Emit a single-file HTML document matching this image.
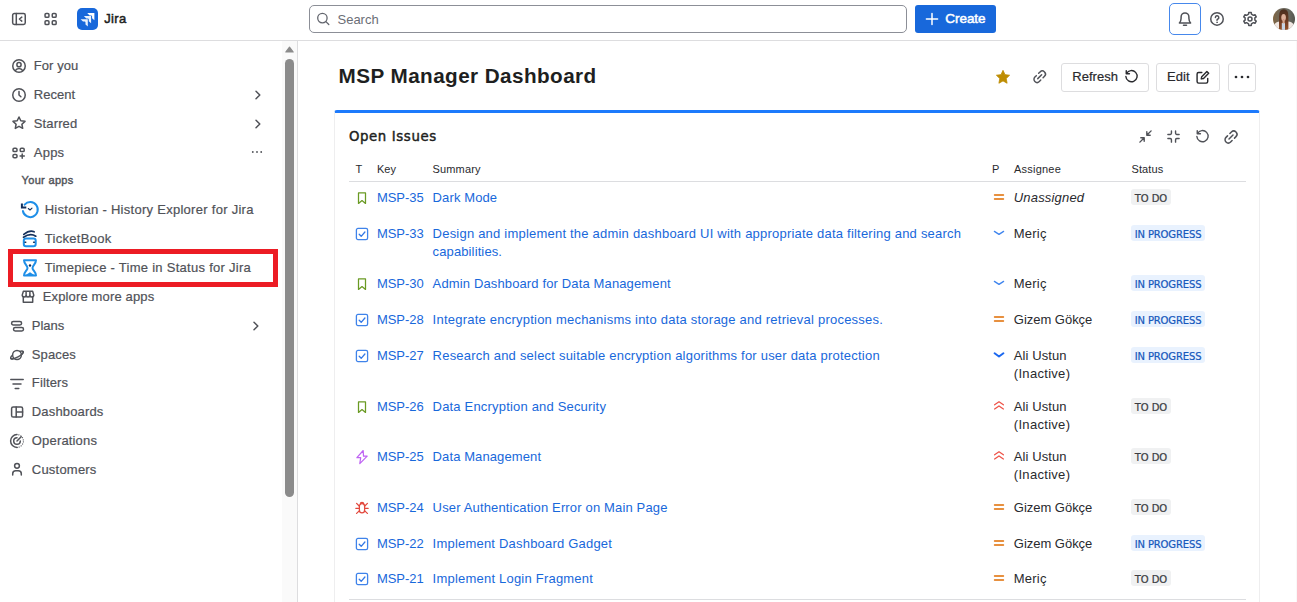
<!DOCTYPE html>
<html lang="en">
<head>
<meta charset="utf-8">
<title>MSP Manager Dashboard - Jira</title>
<style>
*{box-sizing:border-box;margin:0;padding:0}
html,body{width:1297px;height:602px;overflow:hidden;background:#fff}
body{position:relative;font-family:"Liberation Sans",Arial,sans-serif;color:#292a2e;font-size:13px}
.abs{position:absolute}
svg{position:absolute;overflow:visible}
.tx{position:absolute;white-space:nowrap}
.semi{-webkit-text-stroke:.45px currentColor}
.semi2{-webkit-text-stroke:.5px currentColor}
.med{-webkit-text-stroke:.2px currentColor}
.semi3{-webkit-text-stroke:.4px currentColor}
.ic{fill:none;stroke:#505258;stroke-width:1.5;stroke-linecap:round;stroke-linejoin:round}
#topline{left:0;top:40px;width:1297px;height:1px;background:#dddddf}
#jira-logo{left:77px;top:7.8px;width:21.2px;height:21.8px;border-radius:5px;background:#1868db}
#search{left:309px;top:5px;width:598px;height:28px;border:1px solid #8c8f97;border-radius:5px;background:#fff}
#create{left:915px;top:5px;width:81px;height:28px;border-radius:3px;background:#1868db}
#bell{left:1169px;top:3px;width:32px;height:32px;border:1.5px solid #4688ec;border-radius:5px}
#side-border{left:297px;top:41px;width:1px;height:561px;background:#dddddf}
#sb-track{left:282px;top:41px;width:15px;height:561px;background:#fafafa}
#sb-thumb{left:285px;top:59px;width:9px;height:438px;border-radius:5px;background:#8b8b8b}
#redbox{left:8px;top:249px;width:270px;height:38px;border:5px solid #ec1c24}
.btn{position:absolute;top:63px;height:29px;border:1px solid #dddddf;border-radius:3px;background:#fff}
#gadget{left:333.5px;top:110px;width:926.5px;height:500px;border:1px solid #eeeeef;border-top:3px solid #1d7afc;border-radius:3px 3px 0 0;background:#fff}
#hline{left:349px;top:181px;width:897px;height:1px;background:#dcdde0}
#bline{left:349px;top:598.5px;width:897px;height:1px;background:#dcdde0}
#rline{left:1296px;top:41px;width:1px;height:561px;background:#f8f8f8}
.loz{position:absolute;left:1131.2px;height:16px;border-radius:3px;white-space:nowrap;overflow:hidden}
.loz span{position:absolute;left:3.5px;top:2px;font-family:"DejaVu Sans","Liberation Sans",sans-serif;font-size:10px;line-height:16px;-webkit-text-stroke:.22px currentColor}
.todo{background:#f0f1f2;color:#3b3d42}
.prog{background:#e9f2fe;color:#1558bc}
</style>
</head>
<body>

<header>
<!-- TOP BAR -->
<div class="abs" id="topline"></div>
<svg style="left:11px;top:11.450px" width="16" height="16" viewBox="0 0 16 16" class="ic" stroke-width="1.350"><rect x="1.650" y="2.450" width="12.600" height="11.100" rx="1.700"/><path d="M5.300 2.450v11.100M10.800 6.100L8.400 8l2.400 2.100"/></svg>
<svg style="left:43.400px;top:11.450px" width="16" height="16" viewBox="0 0 16 16" class="ic" stroke-width="1.400"><rect x="2.050" y="2.450" width="3.900" height="3.900" rx="1.100"/><rect x="9.250" y="2.450" width="3.900" height="3.900" rx="1.100"/><rect x="2.050" y="9.650" width="3.900" height="3.900" rx="1.100"/><rect x="9.250" y="9.650" width="3.900" height="3.900" rx="1.100"/></svg>
<div class="abs" id="jira-logo"></div>
<svg style="left:77px;top:7.8px" width="21.2" height="21.8" viewBox="77 7.8 21.2 21.8"><g fill="#fff"><path d="M87.2 12.8H94.4V20L92.100 18V16.100Q92.100 15.200 91.200 15.200H89.600z"/><path d="M83.900 15.900H91.100V23.100L88.800 21.100V19.200Q88.800 18.300 87.900 18.300H86.300z" opacity=".92"/><path d="M80.600 19H87.800V26.200L85.500 24.200V22.300Q85.500 21.400 84.600 21.400H83z" opacity=".92"/></g></svg>
<div class="abs" id="search"></div>
<svg style="left:316px;top:12px" width="16" height="16" viewBox="0 0 16 16" class="ic"><circle cx="6.400" cy="6.100" r="4.700" style="stroke:#63666e;stroke-width:1.300"/><path d="M9.900 9.600l2.900 2.900" style="stroke:#63666e;stroke-width:1.300"/></svg>
<div class="abs" id="create"></div>
<svg style="left:924.400px;top:11.400px" width="16" height="16" viewBox="0 0 16 16"><path d="M8 2.400v11.200M2.400 8h11.200" fill="none" stroke="#fff" stroke-width="1.5" stroke-linecap="round"/></svg>
<div class="abs" id="bell"></div>
<svg style="left:1177px;top:11px" width="16" height="16" viewBox="0 0 16 16" class="ic"><path d="M2.400 11.900c1.200-1.300 1.700-2.600 1.700-4.700V5.900a3.900 3.900 0 0 1 7.800 0v1.300c0 2.100.5 3.400 1.700 4.700z"/><path d="M6.500 14.200h3"/></svg>
<svg style="left:1209px;top:11px" width="16" height="16" viewBox="0 0 16 16" class="ic"><circle cx="8" cy="7.900" r="6.250"/><path d="M6.400 6.500a1.700 1.700 0 1 1 2.500 1.500c-.6.300-.9.700-.9 1.300"/><circle cx="8" cy="11.300" r=".5" fill="#505258" stroke-width=".6"/></svg>
<svg style="left:1242.200px;top:10.800px" width="16" height="16" viewBox="0 0 16 16" class="ic"><path id="gearpath" d="M6.54 3.22 L6.74 1.52 L9.26 1.52 L9.46 3.22 L11.41 4.34 L12.98 3.67 L14.24 5.85 L12.87 6.88 L12.87 9.12 L14.24 10.15 L12.98 12.33 L11.41 11.66 L9.46 12.78 L9.26 14.48 L6.74 14.48 L6.54 12.78 L4.59 11.66 L3.02 12.33 L1.76 10.15 L3.13 9.12 L3.13 6.88 L1.76 5.85 L3.02 3.67 L4.59 4.34z"/><circle cx="8" cy="8" r="2"/></svg>
<svg style="left:1273px;top:7.700px" width="22" height="22" viewBox="0 0 22 22"><defs><clipPath id="avc"><circle cx="11" cy="11" r="11"/></clipPath><linearGradient id="avbg" x1="0" x2="1" y1="0" y2="0"><stop offset="0" stop-color="#80643f"/><stop offset=".3" stop-color="#6f685a"/><stop offset=".75" stop-color="#68685f"/><stop offset="1" stop-color="#55554e"/></linearGradient><linearGradient id="avh" x1="0" x2="0" y1="0" y2="1"><stop offset="0" stop-color="#4a2f20"/><stop offset=".55" stop-color="#6a3a22"/><stop offset="1" stop-color="#94522a"/></linearGradient></defs><g clip-path="url(#avc)"><rect width="22" height="22" fill="url(#avbg)"/><path d="M0 18Q3 13.600 7 13.600H15Q19 13.600 22 18V22H0z" fill="#f0e7e2"/><path d="M6 22V8.500Q6 1.300 10.800 1.300T15.400 8.500V22z" fill="url(#avh)"/><rect x="8.800" y="15" width="3.200" height="7" fill="#c6d5e5"/><ellipse cx="10.600" cy="9.600" rx="2.300" ry="3.500" fill="#dcb09a"/><rect x="9.500" y="12.500" width="2.200" height="3" fill="#d6a88e"/><ellipse cx="10.600" cy="11.300" rx=".9" ry=".4" fill="#c77f78"/></g></svg>
<div class="tx semi2" style="left:104.2px;top:9.50px;font-size:13px;line-height:18px;color:#1e1f21;letter-spacing:0.337px;">Jira</div>
<div class="tx" style="left:337.6px;top:10.50px;font-size:13px;line-height:18px;color:#6b6e76;letter-spacing:-0.034px;">Search</div>
<div class="tx semi2" style="left:945.3px;top:9.82px;font-size:13.5px;line-height:18px;color:#ffffff;letter-spacing:-0.055px;">Create</div>
</header>
<nav>
<div class="abs" id="sb-track"></div>
<svg style="left:285px;top:46px" width="9" height="7" viewBox="0 0 9 7"><path d="M.8 6L4.500 1.200 8.200 6z" fill="#8b8b8b" stroke="#8b8b8b" stroke-width="1.200" stroke-linejoin="round"/></svg>
<div class="abs" id="sb-thumb"></div>
<div class="abs" id="side-border"></div>
<div class="abs" id="rline"></div>
<div class="abs" id="redbox"></div>
<svg style="left:10.800px;top:58px" width="16" height="16" viewBox="0 0 16 16" class="ic"><circle cx="8" cy="8" r="6.250"/><circle cx="8" cy="6.700" r="2.100"/><path d="M4.300 12.700c.8-1.500 2.100-2.200 3.700-2.200s2.900.7 3.700 2.200"/></svg>
<svg style="left:10.800px;top:87px" width="16" height="16" viewBox="0 0 16 16" class="ic"><circle cx="8" cy="8" r="6.250"/><path d="M8 4.600V8l1.900 1.700"/></svg>
<svg style="left:10.700px;top:115.400px" width="16" height="16" viewBox="0 0 16 16" class="ic"><path d="M8 2l1.800 3.800 4.200.55-3.100 2.900.8 4.100L8 11.300 4.300 13.350l.8-4.100L2 6.350l4.200-.55z"/></svg>
<svg style="left:10.700px;top:144.600px" width="16" height="16" viewBox="0 0 16 16" class="ic" stroke-width="1.400"><rect x="2" y="3.200" width="4" height="3.400" rx="1.200"/><rect x="9.200" y="3.200" width="4" height="3.400" rx="1.200"/><rect x="2" y="9.400" width="4" height="3.400" rx="1.200"/><path d="M11.200 9v4.200M9.100 11.100h4.200"/></svg>
<!-- chevrons + dots -->
<svg style="left:250.200px;top:87px" width="16" height="16" viewBox="0 0 16 16" class="ic" stroke-width="1.300"><path d="M6 4.200L9.800 8 6 11.800"/></svg>
<svg style="left:250.200px;top:116.400px" width="16" height="16" viewBox="0 0 16 16" class="ic" stroke-width="1.300"><path d="M6 4.200L9.800 8 6 11.800"/></svg>
<svg style="left:248px;top:318.300px" width="16" height="16" viewBox="0 0 16 16" class="ic" stroke-width="1.300"><path d="M6 4.200L9.800 8 6 11.800"/></svg>
<svg style="left:249.200px;top:144px" width="16" height="16" viewBox="0 0 16 16"><g fill="#505258"><circle cx="3.800" cy="8" r=".9"/><circle cx="8" cy="8" r=".9"/><circle cx="12.200" cy="8" r=".9"/></g></svg>
<!-- app icons -->
<svg style="left:20px;top:200px" width="20" height="20" viewBox="20 200 20 20" fill="none" stroke-linecap="round" stroke-linejoin="round"><path d="M24.600 204.700A7.500 7.500 0 1 1 22.900 211" stroke="#1f8fe8" stroke-width="2"/><path d="M21.900 203.500v4.100h4.400" stroke="#14305c" stroke-width="2" stroke-linecap="butt" stroke-linejoin="miter"/><path d="M28.300 208.500l1.700 1.500 2-1.900" stroke="#14305c" stroke-width="1.100"/></svg>
<svg style="left:20px;top:228px" width="20" height="20" viewBox="20 228 20 20" fill="none" stroke-linecap="round" stroke-linejoin="round"><rect x="23.800" y="238.400" width="11.900" height="7.900" rx="2.200" stroke="#1f8fe8" stroke-width="2"/><path d="M23.500 237.200c3.500-2.400 8.500-3.600 12.300-1M23.800 234.400c3.300-2.600 7.400-4 10.300-2.600" stroke="#14305c" stroke-width="1.700"/><path d="M25 242.300h.8M33.600 242.300h.8" stroke="#14305c" stroke-width="1.400"/></svg>
<svg style="left:20px;top:258px" width="20" height="20" viewBox="20 258 20 20" fill="none" stroke-linecap="round" stroke-linejoin="round"><path d="M24 260.200h12c0 3.700-3.500 5.200-3.500 7.700s3.500 4 3.500 7.700H24c0-3.700 3.500-5.200 3.500-7.700S24 263.900 24 260.200z" stroke="#1f8fe8" stroke-width="2"/><path d="M25 275.600L30 272.200 35 275.600z" fill="#1f8fe8"/><circle cx="30" cy="265.500" r="1.200" fill="#14305c"/></svg>
<svg style="left:19.800px;top:289px" width="16" height="16" viewBox="0 0 16 16" class="ic" stroke-width="1.400"><path d="M2.200 6.100L3.400 2.200h9.200l1.200 3.900c0 1-.9 1.800-1.950 1.800S9.900 7.100 9.900 6.100c0 1-.85 1.800-1.900 1.800S6.100 7.100 6.100 6.100c0 1-.9 1.800-1.950 1.800S2.200 7.100 2.200 6.100zM6.100 6.100V2.200M9.900 6.100V2.200"/><path d="M3.300 8v5.200h9.400V8"/></svg>
<svg style="left:8.700px;top:317.800px" width="16" height="16" viewBox="0 0 16 16" class="ic"><rect x="2.600" y="3.600" width="10" height="3.400" rx="1.700"/><rect x="4.500" y="9.500" width="10" height="3.400" rx="1.700"/></svg>
<svg style="left:8.800px;top:346.600px" width="16" height="16" viewBox="0 0 16 16" class="ic" stroke-width="1.400"><ellipse cx="8" cy="8" rx="7.0" ry="2.1" transform="rotate(-28 8 8)"/><circle cx="8" cy="8" r="4.400" fill="#fff"/><path d="M1.82 11.29A7.0 2.1 -28 0 0 14.18 4.71"/></svg>
<svg style="left:8.600px;top:375.700px" width="16" height="16" viewBox="0 0 16 16" class="ic"><path d="M1.800 3.400h12.400M4 8h8M6.200 12.600h3.600"/></svg>
<svg style="left:8.800px;top:403.600px" width="16" height="16" viewBox="0 0 16 16" class="ic"><rect x="2.600" y="2.900" width="11" height="10.200" rx="1.600"/><path d="M7.200 2.900v10.200M7.200 8h6.400"/></svg>
<svg style="left:8.600px;top:432.700px" width="16" height="16" viewBox="0 0 16 16" class="ic" stroke-width="1.400"><path d="M8 1.600A6.400 6.400 0 1 0 8 14.400"/><path d="M8 14.400A6.400 6.400 0 0 0 8 1.600" stroke-dasharray=".1 2.100" stroke-width="1.200"/><path d="M8 4.700A3.300 3.300 0 1 0 11.300 8"/><path d="M8 8l4.200-4.200"/></svg>
<svg style="left:8.800px;top:461.200px" width="16" height="16" viewBox="0 0 16 16" class="ic"><circle cx="8" cy="4.800" r="2.400"/><path d="M3.700 14v-1.200a3 3 0 0 1 3-3h2.600a3 3 0 0 1 3 3V14"/></svg>
<div class="tx med" style="left:33.8px;top:56.50px;font-size:13px;line-height:18px;color:#505258;letter-spacing:0.075px;">For you</div>
<div class="tx med" style="left:33.8px;top:85.50px;font-size:13px;line-height:18px;color:#505258;letter-spacing:0.049px;">Recent</div>
<div class="tx med" style="left:33.8px;top:114.50px;font-size:13px;line-height:18px;color:#505258;letter-spacing:0.123px;">Starred</div>
<div class="tx med" style="left:33.8px;top:143.50px;font-size:13px;line-height:18px;color:#505258;letter-spacing:0.215px;">Apps</div>
<div class="tx semi3" style="left:21.6px;top:171.19px;font-size:11px;line-height:18px;color:#505258;letter-spacing:0.318px;">Your apps</div>
<div class="tx med" style="left:44.7px;top:200.50px;font-size:13px;line-height:18px;color:#505258;letter-spacing:0.280px;">Historian - History Explorer for Jira</div>
<div class="tx med" style="left:44.7px;top:229.50px;font-size:13px;line-height:18px;color:#505258;letter-spacing:0.307px;">TicketBook</div>
<div class="tx med" style="left:44.7px;top:258.50px;font-size:13px;line-height:18px;color:#505258;letter-spacing:0.276px;">Timepiece - Time in Status for Jira</div>
<div class="tx med" style="left:42.7px;top:287.50px;font-size:13px;line-height:18px;color:#505258;letter-spacing:0.151px;">Explore more apps</div>
<div class="tx med" style="left:31.8px;top:316.50px;font-size:13px;line-height:18px;color:#505258;letter-spacing:-0.046px;">Plans</div>
<div class="tx med" style="left:31.8px;top:345.50px;font-size:13px;line-height:18px;color:#505258;letter-spacing:0.121px;">Spaces</div>
<div class="tx med" style="left:31.8px;top:373.50px;font-size:13px;line-height:18px;color:#505258;letter-spacing:0.144px;">Filters</div>
<div class="tx med" style="left:31.8px;top:402.50px;font-size:13px;line-height:18px;color:#505258;letter-spacing:0.159px;">Dashboards</div>
<div class="tx med" style="left:31.8px;top:431.50px;font-size:13px;line-height:18px;color:#505258;letter-spacing:0.171px;">Operations</div>
<div class="tx med" style="left:31.8px;top:460.50px;font-size:13px;line-height:18px;color:#505258;letter-spacing:0.216px;">Customers</div>
</nav>
<main>
<div class="btn" style="left:1061px;width:88px"></div>
<div class="btn" style="left:1156px;width:64px"></div>
<div class="btn" style="left:1228px;width:28px"></div>
<div class="abs" id="gadget"></div>
<div class="abs" id="hline"></div>
<div class="abs" id="bline"></div>
<svg style="left:995.300px;top:69.100px" width="16" height="16.400" viewBox="0 0 16 16" preserveAspectRatio="none"><path d="M8 1.300l2 4.200 4.600.6-3.400 3.200.9 4.600L8 11.600 3.900 13.900l.9-4.600L1.400 6.100 6 5.500z" fill="#be8d03" stroke="#be8d03" stroke-width=".8" stroke-linejoin="round"/></svg>
<svg style="left:1031.600px;top:69.300px" width="15.400" height="15.400" viewBox="0 0 16 16" class="ic"><path d="M6.900 4.500l1.500-1.500a3.250 3.250 0 0 1 4.600 4.600l-1.500 1.500M9.100 11.500l-1.500 1.500a3.250 3.250 0 0 1-4.600-4.600l1.500-1.500M6 10l4-4"/></svg>
<svg style="left:1124px;top:69.400px" width="15" height="15" viewBox="0 0 16 16" class="ic" stroke-width="1.300"><path d="M2.700 4.800A6 6 0 1 1 2 8M2.400 1.700v3.400h3.400" style="stroke:#292a2e"/></svg>
<svg style="left:1195.200px;top:69.500px" width="15.200" height="15.200" viewBox="0 0 16 16" class="ic" stroke-width="1.300"><path d="M7.200 2.600H3.800A1.600 1.600 0 0 0 2.200 4.200v8A1.600 1.600 0 0 0 3.800 13.800h8a1.600 1.600 0 0 0 1.600-1.600V8.800M6.600 9.400l.5-2.400 5.400-5.400 1.900 1.900L9 8.900z" style="stroke:#292a2e"/></svg>
<svg style="left:1233.700px;top:68.500px" width="16" height="16" viewBox="0 0 16 16"><g fill="#292a2e"><circle cx="2" cy="8" r="1.350"/><circle cx="8" cy="8" r="1.350"/><circle cx="14" cy="8" r="1.350"/></g></svg>

<!-- GADGET TOOLBAR ICONS -->
<svg style="left:1137.500px;top:128.900px" width="15" height="15" viewBox="0 0 16 16" class="ic" stroke-width="1.300"><path d="M14 2L9.600 6.400M9.400 3v3.600H13M2 14l4.400-4.400M3 9.400h3.600V13" /></svg>
<svg style="left:1166px;top:128.900px" width="15" height="15" viewBox="0 0 16 16" class="ic" stroke-width="1.300"><path d="M2 5.800h2.600a1.200 1.200 0 0 0 1.200-1.200V2M10.200 2v2.600a1.200 1.200 0 0 0 1.200 1.200H14M14 10.200h-2.600a1.200 1.200 0 0 0-1.200 1.200V14M5.800 14v-2.600a1.200 1.200 0 0 0-1.200-1.200H2"/></svg>
<svg style="left:1194.900px;top:128.900px" width="15" height="15" viewBox="0 0 16 16" class="ic" stroke-width="1.400"><path d="M2.700 4.800A6 6 0 1 1 2 8M2.400 1.700v3.400h3.400"/></svg>
<svg style="left:1222.800px;top:128.600px" width="16" height="16" viewBox="0 0 16 16" class="ic"><path d="M6.900 4.500l1.500-1.500a3.250 3.250 0 0 1 4.600 4.600l-1.500 1.500M9.100 11.500l-1.500 1.500a3.250 3.250 0 0 1-4.600-4.600l1.500-1.500M6 10l4-4"/></svg>
<div class="tx" style="left:338.6px;top:61.83px;font-size:20.7px;line-height:28px;color:#1e1f21;font-weight:700;letter-spacing:0.425px;">MSP Manager Dashboard</div>
<div class="tx med" style="left:1072.3px;top:67.50px;font-size:13px;line-height:18px;color:#292a2e;letter-spacing:0.010px;">Refresh</div>
<div class="tx med" style="left:1167.1px;top:67.50px;font-size:13px;line-height:18px;color:#292a2e;letter-spacing:0.023px;">Edit</div>
<div class="tx semi" style="left:348.9px;top:128.39px;font-size:13.3px;line-height:18px;color:#1e1f21;font-family:'DejaVu Sans','Liberation Sans',sans-serif;letter-spacing:0.622px;">Open Issues</div>
<div class="tx" style="left:355.6px;top:160.19px;font-size:11px;line-height:18px;color:#292a2e;">T</div>
<div class="tx" style="left:377px;top:160.19px;font-size:11px;line-height:18px;color:#292a2e;">Key</div>
<div class="tx" style="left:432.6px;top:160.19px;font-size:11px;line-height:18px;color:#292a2e;letter-spacing:0.134px;">Summary</div>
<div class="tx" style="left:991.9px;top:160.19px;font-size:11px;line-height:18px;color:#292a2e;">P</div>
<div class="tx" style="left:1014px;top:160.19px;font-size:11px;line-height:18px;color:#292a2e;letter-spacing:0.217px;">Assignee</div>
<div class="tx" style="left:1131.5px;top:160.19px;font-size:11px;line-height:18px;color:#292a2e;letter-spacing:0.102px;">Status</div>
<div class="row">
<svg style="left:354.2px;top:189.8px" width="16" height="16" viewBox="0 0 16 16"><path d="M4.500 2.900h7v10.500l-3.500-2.800-3.500 2.800z" fill="none" stroke="#6a9a23" stroke-width="1.250" stroke-linejoin="round"/></svg>
<svg style="left:990.9px;top:188.5px" width="16" height="16" viewBox="0 0 16 16"><path d="M3.500 6h9M3.500 10h9" fill="none" stroke="#e06c00" stroke-width="1.400" stroke-linecap="round"/></svg>
<div class="tx" style="left:376.9px;top:188.50px;font-size:13px;line-height:18px;color:#1868db;letter-spacing:-0.028px;">MSP-35</div>
<div class="tx" style="left:432.6px;top:188.50px;font-size:13px;line-height:18px;color:#1868db;letter-spacing:0.114px;">Dark Mode</div>
<div class="tx" style="left:1013.8px;top:188.50px;font-size:13px;line-height:18px;color:#292a2e;font-style:italic;letter-spacing:0.174px;">Unassigned</div>
<div class="loz todo" style="top:189.2px;width:39.7px"><span style="letter-spacing:-.05px">TO DO</span></div>
</div>
<div class="row">
<svg style="left:354.2px;top:225.8px" width="16" height="16" viewBox="0 0 16 16"><rect x="2.4" y="2.4" width="11.2" height="11.2" rx="1.6" fill="none" stroke="#3f83ea" stroke-width="1.300"/><path d="M5.200 8.300l2 2 3.700-4.300" fill="none" stroke="#3278e6" stroke-width="1.300" stroke-linecap="round" stroke-linejoin="round"/></svg>
<svg style="left:990.9px;top:224.5px" width="16" height="16" viewBox="0 0 16 16"><path d="M3.400 6.400L8 9.400l4.600-3" fill="none" stroke="#3f85ee" stroke-width="1.300" stroke-linecap="round" stroke-linejoin="round"/></svg>
<div class="tx" style="left:376.9px;top:224.50px;font-size:13px;line-height:18px;color:#1868db;letter-spacing:-0.028px;">MSP-33</div>
<div class="tx" style="left:432.6px;top:224.50px;font-size:13px;line-height:18px;color:#1868db;letter-spacing:0.214px;">Design and implement the admin dashboard UI with appropriate data filtering and search</div>
<div class="tx" style="left:432.6px;top:242.50px;font-size:13px;line-height:18px;color:#1868db;letter-spacing:0.120px;">capabilities.</div>
<div class="tx" style="left:1013.8px;top:224.50px;font-size:13px;line-height:18px;color:#292a2e;letter-spacing:0.224px;">Meriç</div>
<div class="loz prog" style="top:225.2px;width:73.9px"><span style="letter-spacing:-.13px">IN PROGRESS</span></div>
</div>
<div class="row">
<svg style="left:354.2px;top:275.8px" width="16" height="16" viewBox="0 0 16 16"><path d="M4.500 2.900h7v10.500l-3.500-2.800-3.500 2.800z" fill="none" stroke="#6a9a23" stroke-width="1.250" stroke-linejoin="round"/></svg>
<svg style="left:990.9px;top:274.5px" width="16" height="16" viewBox="0 0 16 16"><path d="M3.400 6.400L8 9.400l4.600-3" fill="none" stroke="#3f85ee" stroke-width="1.300" stroke-linecap="round" stroke-linejoin="round"/></svg>
<div class="tx" style="left:376.9px;top:274.50px;font-size:13px;line-height:18px;color:#1868db;letter-spacing:-0.028px;">MSP-30</div>
<div class="tx" style="left:432.6px;top:274.50px;font-size:13px;line-height:18px;color:#1868db;letter-spacing:0.137px;">Admin Dashboard for Data Management</div>
<div class="tx" style="left:1013.8px;top:274.50px;font-size:13px;line-height:18px;color:#292a2e;letter-spacing:0.224px;">Meriç</div>
<div class="loz prog" style="top:275.2px;width:73.9px"><span style="letter-spacing:-.13px">IN PROGRESS</span></div>
</div>
<div class="row">
<svg style="left:354.2px;top:311.8px" width="16" height="16" viewBox="0 0 16 16"><rect x="2.4" y="2.4" width="11.2" height="11.2" rx="1.6" fill="none" stroke="#3f83ea" stroke-width="1.300"/><path d="M5.200 8.300l2 2 3.700-4.300" fill="none" stroke="#3278e6" stroke-width="1.300" stroke-linecap="round" stroke-linejoin="round"/></svg>
<svg style="left:990.9px;top:310.5px" width="16" height="16" viewBox="0 0 16 16"><path d="M3.500 6h9M3.500 10h9" fill="none" stroke="#e06c00" stroke-width="1.400" stroke-linecap="round"/></svg>
<div class="tx" style="left:376.9px;top:310.50px;font-size:13px;line-height:18px;color:#1868db;letter-spacing:-0.028px;">MSP-28</div>
<div class="tx" style="left:432.6px;top:310.50px;font-size:13px;line-height:18px;color:#1868db;letter-spacing:0.229px;">Integrate encryption mechanisms into data storage and retrieval processes.</div>
<div class="tx" style="left:1013.8px;top:310.50px;font-size:13px;line-height:18px;color:#292a2e;letter-spacing:-0.023px;">Gizem Gökçe</div>
<div class="loz prog" style="top:311.2px;width:73.9px"><span style="letter-spacing:-.13px">IN PROGRESS</span></div>
</div>
<div class="row">
<svg style="left:354.2px;top:347.8px" width="16" height="16" viewBox="0 0 16 16"><rect x="2.4" y="2.4" width="11.2" height="11.2" rx="1.6" fill="none" stroke="#3f83ea" stroke-width="1.300"/><path d="M5.200 8.300l2 2 3.700-4.300" fill="none" stroke="#3278e6" stroke-width="1.300" stroke-linecap="round" stroke-linejoin="round"/></svg>
<svg style="left:990.9px;top:346.5px" width="16" height="16" viewBox="0 0 16 16"><path d="M3.600 6.300L8 9.500l4.400-3.200" fill="none" stroke="#1b68f0" stroke-width="2" stroke-linecap="round" stroke-linejoin="round"/></svg>
<div class="tx" style="left:376.9px;top:346.50px;font-size:13px;line-height:18px;color:#1868db;letter-spacing:-0.028px;">MSP-27</div>
<div class="tx" style="left:432.6px;top:346.50px;font-size:13px;line-height:18px;color:#1868db;letter-spacing:0.211px;">Research and select suitable encryption algorithms for user data protection</div>
<div class="tx" style="left:1013.8px;top:346.50px;font-size:13px;line-height:18px;color:#292a2e;letter-spacing:0.085px;">Ali Ustun</div>
<div class="tx" style="left:1013.8px;top:364.50px;font-size:13px;line-height:18px;color:#292a2e;letter-spacing:0.303px;">(Inactive)</div>
<div class="loz prog" style="top:347.2px;width:73.9px"><span style="letter-spacing:-.13px">IN PROGRESS</span></div>
</div>
<div class="row">
<svg style="left:354.2px;top:398.8px" width="16" height="16" viewBox="0 0 16 16"><path d="M4.500 2.900h7v10.500l-3.500-2.800-3.500 2.800z" fill="none" stroke="#6a9a23" stroke-width="1.250" stroke-linejoin="round"/></svg>
<svg style="left:990.9px;top:397.5px" width="16" height="16" viewBox="0 0 16 16"><path d="M3.600 6.800L8 3.800l4.400 3M3.600 11L8 8l4.400 3" fill="none" stroke="#ee5247" stroke-width="1.250" stroke-linecap="round" stroke-linejoin="round"/></svg>
<div class="tx" style="left:376.9px;top:397.50px;font-size:13px;line-height:18px;color:#1868db;letter-spacing:-0.028px;">MSP-26</div>
<div class="tx" style="left:432.6px;top:397.50px;font-size:13px;line-height:18px;color:#1868db;letter-spacing:0.183px;">Data Encryption and Security</div>
<div class="tx" style="left:1013.8px;top:397.50px;font-size:13px;line-height:18px;color:#292a2e;letter-spacing:0.085px;">Ali Ustun</div>
<div class="tx" style="left:1013.8px;top:415.50px;font-size:13px;line-height:18px;color:#292a2e;letter-spacing:0.303px;">(Inactive)</div>
<div class="loz todo" style="top:398.2px;width:39.7px"><span style="letter-spacing:-.05px">TO DO</span></div>
</div>
<div class="row">
<svg style="left:354.2px;top:448.8px" width="16" height="16" viewBox="0 0 16 16"><path d="M9.200 1.500L2.900 8.700h3.800l-.9 6L13.200 7.200H9.500z" fill="none" stroke="#bf63f3" stroke-width="1.200" stroke-linejoin="round"/></svg>
<svg style="left:990.9px;top:447.5px" width="16" height="16" viewBox="0 0 16 16"><path d="M3.600 6.800L8 3.800l4.400 3M3.600 11L8 8l4.400 3" fill="none" stroke="#ee5247" stroke-width="1.250" stroke-linecap="round" stroke-linejoin="round"/></svg>
<div class="tx" style="left:376.9px;top:447.50px;font-size:13px;line-height:18px;color:#1868db;letter-spacing:-0.028px;">MSP-25</div>
<div class="tx" style="left:432.6px;top:447.50px;font-size:13px;line-height:18px;color:#1868db;letter-spacing:0.103px;">Data Management</div>
<div class="tx" style="left:1013.8px;top:447.50px;font-size:13px;line-height:18px;color:#292a2e;letter-spacing:0.085px;">Ali Ustun</div>
<div class="tx" style="left:1013.8px;top:465.50px;font-size:13px;line-height:18px;color:#292a2e;letter-spacing:0.303px;">(Inactive)</div>
<div class="loz todo" style="top:448.2px;width:39.7px"><span style="letter-spacing:-.05px">TO DO</span></div>
</div>
<div class="row">
<svg style="left:354.2px;top:499.8px" width="16" height="16" viewBox="0 0 16 16" fill="none" stroke="#e2483d" stroke-width="1.250" stroke-linecap="round"><path d="M5.400 6.200a2.600 2.600 0 0 1 5.200 0v4a2.600 2.600 0 0 1-5.200 0z"/><path d="M6.300 4a1.700 1.700 0 0 1 3.400 0M5.400 6.200L2.600 3.400M10.600 6.200L13.400 3.400M5.400 8.300H1.800M14.200 8.300h-3.600M5.500 10.600L2.600 13.400M10.500 10.600L13.400 13.400"/></svg>
<svg style="left:990.9px;top:498.5px" width="16" height="16" viewBox="0 0 16 16"><path d="M3.500 6h9M3.500 10h9" fill="none" stroke="#e06c00" stroke-width="1.400" stroke-linecap="round"/></svg>
<div class="tx" style="left:376.9px;top:498.50px;font-size:13px;line-height:18px;color:#1868db;letter-spacing:-0.028px;">MSP-24</div>
<div class="tx" style="left:432.6px;top:498.50px;font-size:13px;line-height:18px;color:#1868db;letter-spacing:0.156px;">User Authentication Error on Main Page</div>
<div class="tx" style="left:1013.8px;top:498.50px;font-size:13px;line-height:18px;color:#292a2e;letter-spacing:-0.023px;">Gizem Gökçe</div>
<div class="loz todo" style="top:499.2px;width:39.7px"><span style="letter-spacing:-.05px">TO DO</span></div>
</div>
<div class="row">
<svg style="left:354.2px;top:535.8px" width="16" height="16" viewBox="0 0 16 16"><rect x="2.4" y="2.4" width="11.2" height="11.2" rx="1.6" fill="none" stroke="#3f83ea" stroke-width="1.300"/><path d="M5.200 8.300l2 2 3.700-4.300" fill="none" stroke="#3278e6" stroke-width="1.300" stroke-linecap="round" stroke-linejoin="round"/></svg>
<svg style="left:990.9px;top:534.5px" width="16" height="16" viewBox="0 0 16 16"><path d="M3.500 6h9M3.500 10h9" fill="none" stroke="#e06c00" stroke-width="1.400" stroke-linecap="round"/></svg>
<div class="tx" style="left:376.9px;top:534.50px;font-size:13px;line-height:18px;color:#1868db;letter-spacing:-0.028px;">MSP-22</div>
<div class="tx" style="left:432.6px;top:534.50px;font-size:13px;line-height:18px;color:#1868db;letter-spacing:0.206px;">Implement Dashboard Gadget</div>
<div class="tx" style="left:1013.8px;top:534.50px;font-size:13px;line-height:18px;color:#292a2e;letter-spacing:-0.023px;">Gizem Gökçe</div>
<div class="loz prog" style="top:535.2px;width:73.9px"><span style="letter-spacing:-.13px">IN PROGRESS</span></div>
</div>
<div class="row">
<svg style="left:354.2px;top:570.8px" width="16" height="16" viewBox="0 0 16 16"><rect x="2.4" y="2.4" width="11.2" height="11.2" rx="1.6" fill="none" stroke="#3f83ea" stroke-width="1.300"/><path d="M5.200 8.300l2 2 3.700-4.300" fill="none" stroke="#3278e6" stroke-width="1.300" stroke-linecap="round" stroke-linejoin="round"/></svg>
<svg style="left:990.9px;top:569.5px" width="16" height="16" viewBox="0 0 16 16"><path d="M3.500 6h9M3.500 10h9" fill="none" stroke="#e06c00" stroke-width="1.400" stroke-linecap="round"/></svg>
<div class="tx" style="left:376.9px;top:569.50px;font-size:13px;line-height:18px;color:#1868db;letter-spacing:-0.028px;">MSP-21</div>
<div class="tx" style="left:432.6px;top:569.50px;font-size:13px;line-height:18px;color:#1868db;letter-spacing:0.214px;">Implement Login Fragment</div>
<div class="tx" style="left:1013.8px;top:569.50px;font-size:13px;line-height:18px;color:#292a2e;letter-spacing:0.224px;">Meriç</div>
<div class="loz todo" style="top:570.2px;width:39.7px"><span style="letter-spacing:-.05px">TO DO</span></div>
</div>
</main>
</body>
</html>
